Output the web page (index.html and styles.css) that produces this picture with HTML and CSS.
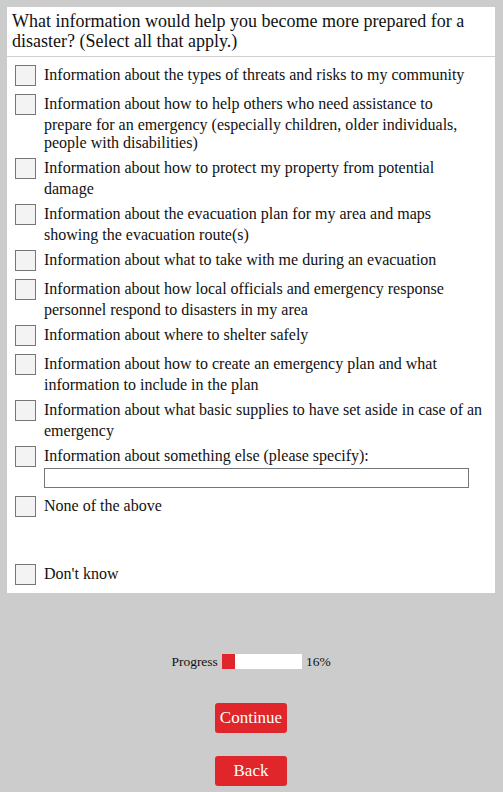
FILE: index.html
```html
<!DOCTYPE html>
<html lang="en">
<head>
<meta charset="utf-8">
<title>Survey</title>
<link rel="stylesheet" href="styles.css">
</head>
<body>
<div class="page">
  <form class="panel">
    <div class="title">What information would help you become more prepared for a<br>disaster? (Select all that apply.)</div>
    <div class="list">
      <label class="item"><input type="checkbox" class="box"><span class="text">Information about the types of threats and risks to my community</span></label>
      <label class="item"><input type="checkbox" class="box"><span class="text">Information about how to help others who need assistance to<br>prepare for an emergency (especially children, older individuals,<br>people with disabilities)</span></label>
      <label class="item"><input type="checkbox" class="box"><span class="text">Information about how to protect my property from potential<br>damage</span></label>
      <label class="item"><input type="checkbox" class="box"><span class="text">Information about the evacuation plan for my area and maps<br>showing the evacuation route(s)</span></label>
      <label class="item"><input type="checkbox" class="box"><span class="text">Information about what to take with me during an evacuation</span></label>
      <label class="item"><input type="checkbox" class="box"><span class="text">Information about how local officials and emergency response<br>personnel respond to disasters in my area</span></label>
      <label class="item"><input type="checkbox" class="box"><span class="text">Information about where to shelter safely</span></label>
      <label class="item"><input type="checkbox" class="box"><span class="text">Information about how to create an emergency plan and what<br>information to include in the plan</span></label>
      <label class="item"><input type="checkbox" class="box"><span class="text">Information about what basic supplies to have set aside in case of an<br>emergency</span></label>
      <div class="item"><input type="checkbox" class="box"><div class="other"><span class="text">Information about something else (please specify):</span><input type="text" class="specify"></div></div>
      <label class="item"><input type="checkbox" class="box"><span class="text">None of the above</span></label>
      <label class="item item-last"><input type="checkbox" class="box"><span class="text">Don't know</span></label>
    </div>
  </form>
  <div class="progress">
    <span class="progress-label">Progress</span>
    <span class="bar"><span class="fill" style="width:16%"></span></span>
    <span class="progress-label">16%</span>
  </div>
  <div class="buttons">
    <button type="button" class="btn">Continue</button>
    <button type="button" class="btn">Back</button>
  </div>
</div>
</body>
</html>
```
FILE: styles.css
```css
html, body {
  margin: 0;
  padding: 0;
  background: #cccccc;
}
body {
  font-family: "Liberation Serif", "Times New Roman", serif;
  color: #111111;
}
.page {
  padding: 7px 8px 0 7px;
}
.panel {
  background: #ffffff;
  display: block;
  margin: 0;
  padding: 0 0 6px 0;
}
.title {
  font-size: 18px;
  line-height: 20px;
  padding: 4px 5px 5px 5px;
  border-bottom: 1px solid #d0d0d0;
  white-space: nowrap;
}
.list {
  display: flex;
  flex-direction: column;
  gap: 6px;
  padding: 8px 0 0 8px;
}
.item {
  display: flex;
  align-items: flex-start;
  gap: 8px;
}
.item-last {
  margin-top: 39px;
}
.box {
  -webkit-appearance: none;
  appearance: none;
  display: block;
  flex: none;
  width: 21px;
  height: 21px;
  margin: 0 0 2px 0;
  box-sizing: border-box;
  border: 1px solid #767676;
  background: #f3f3f3;
  border-radius: 0;
}
.text {
  display: block;
  font-size: 16px;
  line-height: 18px;
  padding-top: 1px;
  white-space: nowrap;
}
.text::before {
  content: "";
  display: inline-block;
  width: 0;
  height: 21px;
  vertical-align: top;
}
.other {
  display: flex;
  flex-direction: column;
}
.specify {
  display: block;
  width: 425px;
  height: 20px;
  box-sizing: border-box;
  margin: 0 0 2px 0;
  border: 1px solid #767676;
  background: #ffffff;
  padding: 0;
}
.progress {
  display: flex;
  justify-content: center;
  align-items: center;
  gap: 4px;
  margin-top: 61px;
  height: 15px;
}
.progress-label {
  font-size: 13.5px;
}
.bar {
  display: block;
  width: 80px;
  height: 15px;
  background: #ffffff;
}
.fill {
  display: block;
  height: 100%;
  background: #e0262a;
}
.buttons {
  display: flex;
  flex-direction: column;
  align-items: center;
  gap: 23px;
  margin-top: 34px;
}
.btn {
  width: 72px;
  height: 30px;
  padding: 0;
  border: none;
  border-radius: 3px;
  background: #e0262a;
  color: #ffffff;
  font-family: "Liberation Serif", "Times New Roman", serif;
  font-size: 17px;
}
```
